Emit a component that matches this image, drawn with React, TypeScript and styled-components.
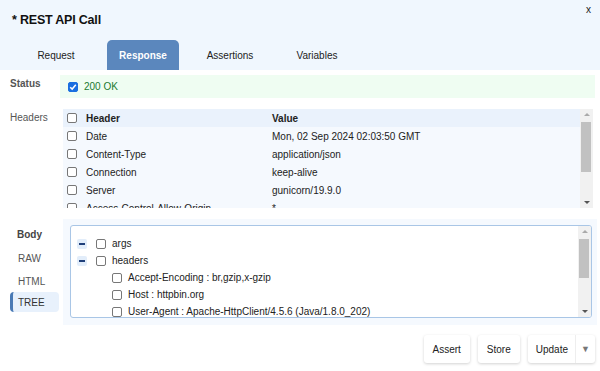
import styled, { createGlobalStyle } from "styled-components";

const GlobalStyle = createGlobalStyle`
    body {
        margin: 0;
        background: #ffffff;
        font-family: "Liberation Sans", Arial, sans-serif;
        font-size: 10px;
        color: #222;
    }
`;

const Page = styled.div`
    width: 600px;
    height: 371px;
    overflow: hidden;
`;

const Top = styled.header`
    background: #f0f7fe;
    height: 70px;
    display: flex;
    flex-direction: column;
`;

const TitleBar = styled.div`
    height: 40px;
    display: flex;
    justify-content: space-between;
    align-items: flex-start;
    padding: 0 9px 0 12px;
`;

const Title = styled.h1`
    margin: 12px 0 0;
    font-size: 12.5px;
    line-height: 16px;
    font-weight: bold;
    color: #111;
    letter-spacing: -0.2px;
`;

const Close = styled.span`
    margin-top: 4px;
    font-size: 10px;
    line-height: 12px;
    color: #222;
`;

const Tabs = styled.nav`
    display: flex;
    gap: 15px;
    padding-left: 20px;
    height: 30px;
`;

const Tab = styled.div<{ $active?: boolean }>`
    width: 72px;
    display: flex;
    align-items: center;
    justify-content: center;
    border-radius: 5px 5px 0 0;
    font-size: 10px;
    font-weight: ${p => (p.$active ? "bold" : "normal")};
    color: ${p => (p.$active ? "#fff" : "#222")};
    background: ${p => (p.$active ? "#5b87bd" : "transparent")};
`;

const Section = styled.section<{ $top: number }>`
    display: flex;
    margin-top: ${p => p.$top}px;
`;

const Label = styled.div<{ $bold?: boolean; $width: number }>`
    width: ${p => p.$width}px;
    flex-shrink: 0;
    padding: 4px 0 0 10px;
    box-sizing: border-box;
    color: #555;
    font-weight: ${p => (p.$bold ? "bold" : "normal")};
    line-height: 10px;
`;

const StatusBox = styled.div`
    width: 535px;
    height: 23px;
    background: #effdf2;
    display: flex;
    align-items: center;
    gap: 6px;
    padding-left: 8px;
    box-sizing: border-box;
    color: #1b7a30;
`;

const Check = styled.span<{ $checked?: boolean }>`
    width: 10px;
    height: 10px;
    box-sizing: border-box;
    flex-shrink: 0;
    border-radius: 2px;
    border: 1px solid ${p => (p.$checked ? "#1a6fe0" : "#777")};
    background: ${p => (p.$checked ? "#1a6fe0" : "#fff")};
    display: flex;
    align-items: center;
    justify-content: center;
`;

const TableWrap = styled.div`
    width: 530px;
    height: 99px;
    display: flex;
    background: #f5f9fe;
    overflow: hidden;
`;

const Table = styled.div`
    flex: 1;
    overflow: hidden;
`;

const Row = styled.div<{ $head?: boolean }>`
    height: 18px;
    display: flex;
    align-items: center;
    background: ${p => (p.$head ? "#eaf2fc" : "transparent")};
    font-weight: ${p => (p.$head ? "bold" : "normal")};
    color: #222;
    white-space: nowrap;
`;

const NameCell = styled.div`
    width: 209px;
    display: flex;
    align-items: center;
    gap: 9px;
    padding-left: 4px;
    box-sizing: border-box;
`;

const ValueCell = styled.div`
    flex: 1;
`;

const Scrollbar = styled.div<{ $thumbTop: number; $thumbHeight: number }>`
    width: 13px;
    flex-shrink: 0;
    background: #f1f1f1;
    display: flex;
    flex-direction: column;
    align-items: center;
    justify-content: space-between;
    padding: 4px 0;
    box-sizing: border-box;
    position: relative;
    &::after {
        content: "";
        position: absolute;
        left: 1px;
        right: 2px;
        top: ${p => p.$thumbTop}px;
        height: ${p => p.$thumbHeight}px;
        background: #c1c1c1;
    }
`;

const Arrow = styled.span<{ $down?: boolean }>`
    width: 0;
    height: 0;
    border-left: 3px solid transparent;
    border-right: 3px solid transparent;
    ${p =>
        p.$down
            ? "border-top: 3px solid #555;"
            : "border-bottom: 3px solid #aaa;"}
`;

const BodyLeft = styled.div`
    width: 63px;
    flex-shrink: 0;
    padding: 10px 0 0 10px;
    box-sizing: border-box;
    display: flex;
    flex-direction: column;
`;

const BodyTitle = styled.div`
    padding-left: 7px;
    font-weight: bold;
    color: #444;
    line-height: 12px;
    margin-bottom: 7px;
`;

const ViewTab = styled.div<{ $active?: boolean }>`
    width: 49px;
    height: 20px;
    box-sizing: border-box;
    display: flex;
    align-items: center;
    padding-left: ${p => (p.$active ? "5px" : "8px")};
    margin-bottom: ${p => (p.$active ? "0" : "3px")};
    margin-top: ${p => (p.$active ? "-2px" : "0")};
    color: ${p => (p.$active ? "#333" : "#555")};
    border-radius: 4px;
    background: ${p => (p.$active ? "#e8f1fc" : "transparent")};
    border-left: ${p => (p.$active ? "3px solid #4a7ab5" : "none")};
`;

const BodyPanel = styled.div`
    width: 534px;
    height: 106px;
    background: #f5f9fe;
    padding: 6px 5px 9px 7px;
    box-sizing: border-box;
`;

const TreeBox = styled.div`
    height: 91px;
    background: #fff;
    border: 1px solid #a9c6e6;
    border-radius: 3px;
    display: flex;
    overflow: hidden;
`;

const Tree = styled.div`
    flex: 1;
    padding-top: 9px;
    overflow: hidden;
`;

const Node = styled.div<{ $depth: number }>`
    height: 17px;
    display: flex;
    align-items: center;
    gap: 6px;
    padding-left: ${p => (p.$depth ? 41 : 6)}px;
    white-space: nowrap;
    color: #222;
`;

const Toggle = styled.span`
    width: 10px;
    height: 10px;
    margin-right: 3px;
    border-radius: 2px;
    background: #e2edfa;
    display: flex;
    align-items: center;
    justify-content: center;
    &::before {
        content: "";
        width: 6px;
        height: 2px;
        background: #1f3f7a;
    }
`;

const Footer = styled.footer`
    display: flex;
    justify-content: flex-end;
    gap: 8px;
    margin-top: 10px;
    padding-right: 5px;
`;

const Button = styled.button`
    height: 28px;
    padding: 0 9px;
    border: none;
    border-radius: 3px;
    background: #fff;
    box-shadow: 0 1px 3px rgba(0, 0, 0, 0.18);
    font-family: "Liberation Sans", Arial, sans-serif;
    font-size: 10px;
    color: #222;
    display: flex;
    align-items: center;
`;

const SplitButton = styled(Button)`
    padding: 0 0 0 8px;
`;

const Caret = styled.span`
    margin-left: 7px;
    height: 28px;
    width: 19px;
    border-left: 1px solid #eee;
    display: flex;
    align-items: center;
    justify-content: center;
    color: #777;
    font-size: 9px;
`;

const headers = [
    ["Date", "Mon, 02 Sep 2024 02:03:50 GMT"],
    ["Content-Type", "application/json"],
    ["Connection", "keep-alive"],
    ["Server", "gunicorn/19.9.0"],
    ["Access-Control-Allow-Origin", "*"],
];

const treeNodes: { depth: number; label: string; toggle?: boolean }[] = [
    { depth: 0, label: "args", toggle: true },
    { depth: 0, label: "headers", toggle: true },
    { depth: 1, label: "Accept-Encoding : br,gzip,x-gzip" },
    { depth: 1, label: "Host : httpbin.org" },
    { depth: 1, label: "User-Agent : Apache-HttpClient/4.5.6 (Java/1.8.0_202)" },
];

function Tick() {
    return (
        <svg width="8" height="8" viewBox="0 0 8 8">
            <path d="M1.2 4.2 L3.2 6.1 L6.8 1.8" stroke="#fff" strokeWidth="1.5" fill="none" />
        </svg>
    );
}

export default function App() {
    return (
        <Page>
            <GlobalStyle />
            <Top>
                <TitleBar>
                    <Title>* REST API Call</Title>
                    <Close>x</Close>
                </TitleBar>
                <Tabs>
                    <Tab>Request</Tab>
                    <Tab $active>Response</Tab>
                    <Tab>Assertions</Tab>
                    <Tab>Variables</Tab>
                </Tabs>
            </Top>

            <Section $top={5}>
                <Label $bold $width={60}>Status</Label>
                <StatusBox>
                    <Check $checked><Tick /></Check>
                    200 OK
                </StatusBox>
            </Section>

            <Section $top={11}>
                <Label $width={63}>Headers</Label>
                <TableWrap>
                    <Table>
                        <Row $head>
                            <NameCell><Check />Header</NameCell>
                            <ValueCell>Value</ValueCell>
                        </Row>
                        {headers.map(([name, value]) => (
                            <Row key={name}>
                                <NameCell><Check />{name}</NameCell>
                                <ValueCell>{value}</ValueCell>
                            </Row>
                        ))}
                    </Table>
                    <Scrollbar $thumbTop={13} $thumbHeight={50}>
                        <Arrow />
                        <Arrow $down />
                    </Scrollbar>
                </TableWrap>
            </Section>

            <Section $top={11}>
                <BodyLeft>
                    <BodyTitle>Body</BodyTitle>
                    <ViewTab>RAW</ViewTab>
                    <ViewTab>HTML</ViewTab>
                    <ViewTab $active>TREE</ViewTab>
                </BodyLeft>
                <BodyPanel>
                    <TreeBox>
                        <Tree>
                            {treeNodes.map(n => (
                                <Node key={n.label} $depth={n.depth}>
                                    {n.toggle && <Toggle />}
                                    <Check />
                                    {n.label}
                                </Node>
                            ))}
                        </Tree>
                        <Scrollbar $thumbTop={13} $thumbHeight={39}>
                            <Arrow />
                            <Arrow $down />
                        </Scrollbar>
                    </TreeBox>
                </BodyPanel>
            </Section>

            <Footer>
                <Button>Assert</Button>
                <Button>Store</Button>
                <SplitButton>
                    Update
                    <Caret>▼</Caret>
                </SplitButton>
            </Footer>
        </Page>
    );
}
